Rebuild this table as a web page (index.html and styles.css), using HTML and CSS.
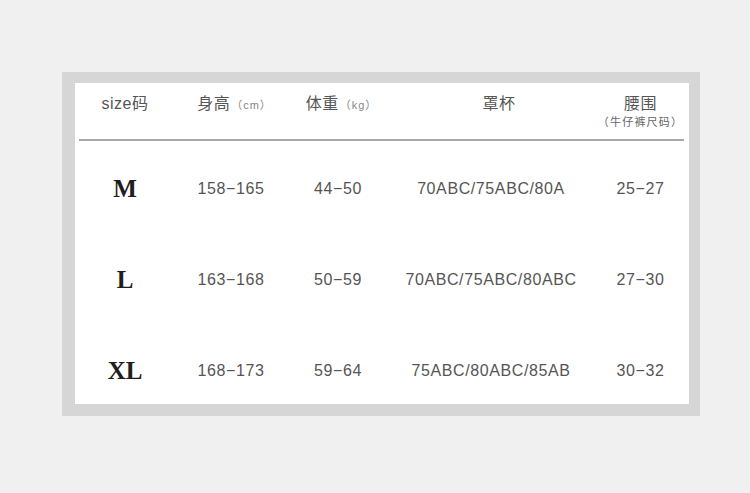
FILE: index.html
```html
<!DOCTYPE html>
<html lang="zh">
<head>
<meta charset="utf-8">
<link rel="stylesheet" href="styles.css">
</head>
<body>
<div class="page">
  <div class="frame">
    <div class="sheet">
      <div class="row head">
        <div class="cell">size码</div>
        <div class="cell unitcell">身高<span class="unit">（cm）</span></div>
        <div class="cell unitcell">体重<span class="unit">（kg）</span></div>
        <div class="cell cup">罩杯</div>
        <div class="cell">腰围<div class="sub">（牛仔裤尺码）</div></div>
      </div>
      <div class="body">
        <div class="row">
          <div class="cell size">M</div>
          <div class="cell">158−165</div>
          <div class="cell">44−50</div>
          <div class="cell">70ABC/75ABC/80A</div>
          <div class="cell">25−27</div>
        </div>
        <div class="row">
          <div class="cell size">L</div>
          <div class="cell">163−168</div>
          <div class="cell">50−59</div>
          <div class="cell">70ABC/75ABC/80ABC</div>
          <div class="cell">27−30</div>
        </div>
        <div class="row">
          <div class="cell size">XL</div>
          <div class="cell">168−173</div>
          <div class="cell">59−64</div>
          <div class="cell">75ABC/80ABC/85AB</div>
          <div class="cell">30−32</div>
        </div>
      </div>
    </div>
  </div>
</div>
</body>
</html>
```
FILE: styles.css
```css
html, body {
  margin: 0;
  padding: 0;
  background: #f0f0f0;
}
body {
  font-family: "Liberation Sans", "Noto Sans CJK SC", sans-serif;
  color: #555;
}
.page {
  padding: 72px 0 0 62px;
}
.frame {
  width: 638px;
  height: 344px;
  box-sizing: border-box;
  background: #d6d6d6;
  padding: 11px 11px 12px 13px;
}
.sheet {
  background: #fff;
  height: 321px;
  box-sizing: border-box;
  padding: 0 5px 0 4px;
}
.row {
  display: grid;
  grid-template-columns: 92px 120px 94px 212px 87px;
}
.cell {
  text-align: center;
  white-space: nowrap;
}
.head {
  height: 56px;
  border-bottom: 2px solid #a8a8a8;
  align-items: start;
}
.head .cell {
  padding-top: 11px;
  font-size: 16px;
  line-height: 20px;
  letter-spacing: 0.5px;
  color: #555;
}
.head .unitcell {
  padding-left: 7px;
}
.head .cup {
  padding-left: 16px;
}
.unit {
  font-size: 11px;
  color: #888;
  letter-spacing: 1px;
  margin-left: 1px;
}
.sub {
  font-size: 11px;
  line-height: 15px;
  color: #666;
  letter-spacing: 1.2px;
  margin-top: 1px;
}
.body {
  padding-top: 2px;
}
.body .row {
  height: 91px;
  align-items: center;
  font-size: 16px;
  letter-spacing: 0.6px;
}
.size {
  font-family: "Liberation Serif", serif;
  font-weight: bold;
  font-size: 25px;
  color: #1e1e1e;
  letter-spacing: 0;
}
```
